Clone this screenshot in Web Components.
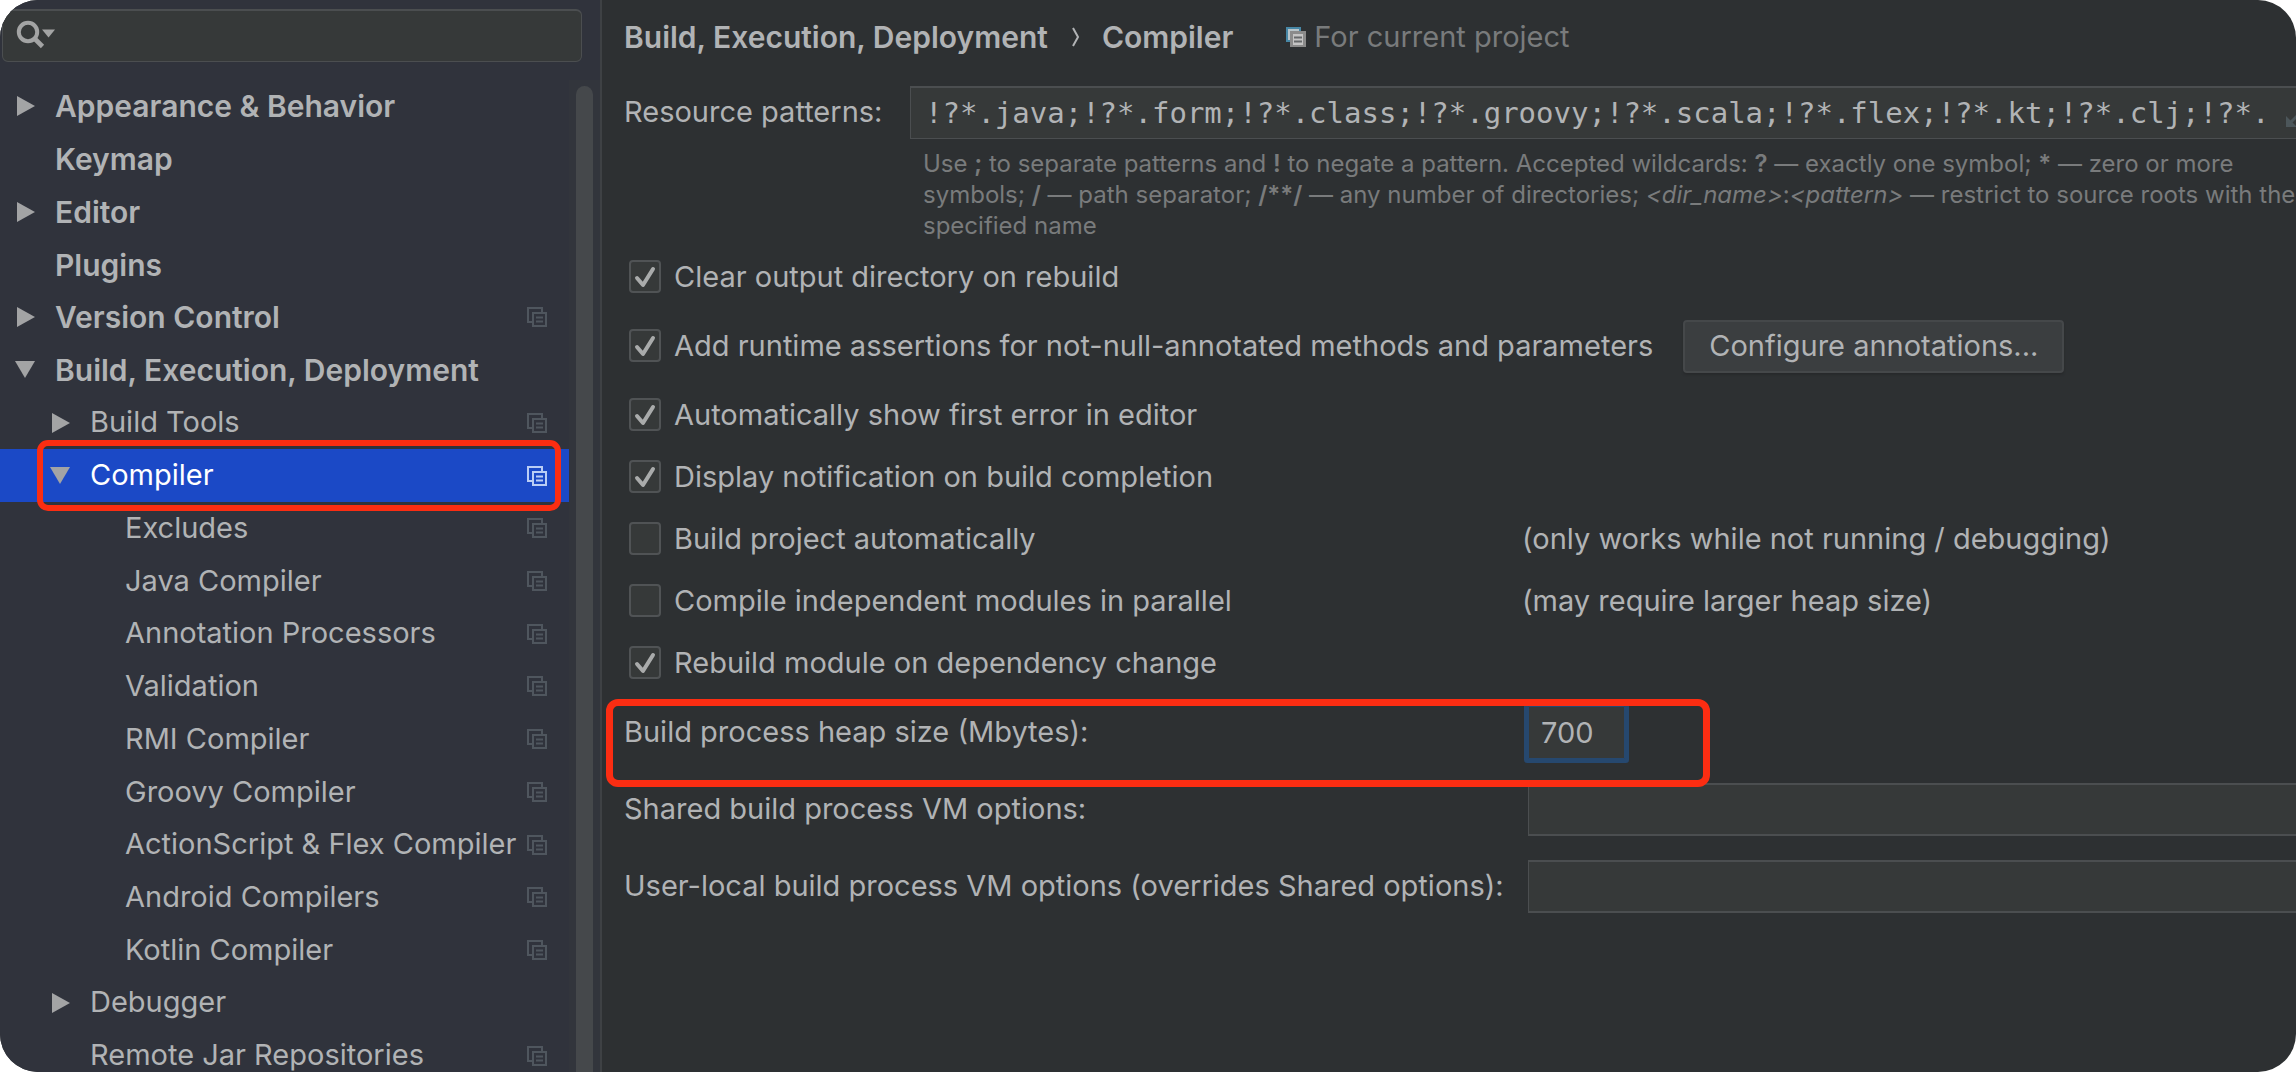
<!DOCTYPE html>
<html lang="en">
<head>
<meta charset="utf-8">
<title>Settings – Compiler</title>
<style>
  html, body { height: 100%; margin: 0; background: #fff; }
  body {
    --text: #b1b3b5;
    --muted: #797b7c;
    --field: #363939;
    --edge: #4b4e50;
    --mark: #fb2d12;
    color: var(--text);
    font: 400 29px/1.2 Inter, sans-serif;
  }
</style>
</head>
<body>
<settings-dialog>
  <settings-sidebar slot="side">
    <search-field slot="search"></search-field>
    <tree-item level="0" arrow="closed">Appearance &amp; Behavior</tree-item>
    <tree-item level="0">Keymap</tree-item>
    <tree-item level="0" arrow="closed">Editor</tree-item>
    <tree-item level="0">Plugins</tree-item>
    <tree-item level="0" arrow="closed" project>Version Control</tree-item>
    <tree-item level="0" arrow="open">Build, Execution, Deployment</tree-item>
    <tree-item level="1" arrow="closed" project>Build Tools</tree-item>
    <tree-item level="1" arrow="open" project selected>Compiler</tree-item>
    <tree-item level="2" project>Excludes</tree-item>
    <tree-item level="2" project>Java Compiler</tree-item>
    <tree-item level="2" project>Annotation Processors</tree-item>
    <tree-item level="2" project>Validation</tree-item>
    <tree-item level="2" project>RMI Compiler</tree-item>
    <tree-item level="2" project>Groovy Compiler</tree-item>
    <tree-item level="2" project>ActionScript &amp; Flex Compiler</tree-item>
    <tree-item level="2" project>Android Compilers</tree-item>
    <tree-item level="2" project>Kotlin Compiler</tree-item>
    <tree-item level="1" arrow="closed">Debugger</tree-item>
    <tree-item level="1" project>Remote Jar Repositories</tree-item>
  </settings-sidebar>

  <page-header>
    <a slot="parent" href="#build">Build, Execution, Deployment</a>
    <span slot="current">Compiler</span>
    <span slot="scope">For current project</span>
  </page-header>

  <pattern-field value="!?*.java;!?*.form;!?*.class;!?*.groovy;!?*.scala;!?*.flex;!?*.kt;!?*.clj;!?*.">
    <span slot="label">Resource patterns:</span>
    Use <b>;</b> to separate patterns and <b>!</b> to negate a pattern. Accepted wildcards: <b>?</b> — exactly one symbol; <b>*</b> — zero or more<br>
    symbols; <b>/</b> — path separator; <b>/**/</b> — any number of directories; <i>&lt;dir_name&gt;</i>:<i>&lt;pattern&gt;</i> — restrict to source roots with the<br>
    specified name
  </pattern-field>

  <check-row checked>Clear output directory on rebuild</check-row>
  <check-row checked tall>Add runtime assertions for not-null-annotated methods and parameters
    <push-button slot="action">Configure annotations...</push-button></check-row>
  <check-row checked>Automatically show first error in editor</check-row>
  <check-row checked>Display notification on build completion</check-row>
  <check-row>Build project automatically<span slot="note">(only works while not running / debugging)</span></check-row>
  <check-row>Compile independent modules in parallel<span slot="note">(may require larger heap size)</span></check-row>
  <check-row checked>Rebuild module on dependency change</check-row>

  <text-row value="700" short marked>Build process heap size (Mbytes):</text-row>
  <text-row>Shared build process VM options:</text-row>
  <text-row>User-local build process VM options (overrides Shared options):</text-row>
</settings-dialog>

<script>
const define = (name, render) => customElements.define(name, class extends HTMLElement {
  constructor() {
    super();
    this.attachShadow({ mode: 'open' });
  }
  connectedCallback() {
    this.shadowRoot.innerHTML = '<style>*{box-sizing:border-box}</style>' + render(this);
  }
});

define('settings-dialog', () => `
  <style>
    :host { display: flex; height: 100vh; overflow: hidden; border-radius: 38px; background: #2d3032; }
    main { flex: 1; min-width: 0; padding-left: 22px; border-left: 2px solid #3e4144; overflow: hidden; white-space: nowrap; }
  </style>
  <slot name="side"></slot>
  <main><slot></slot></main>`);

define('settings-sidebar', () => `
  <style>
    :host { display: flex; flex-direction: column; flex: none; width: 600px; overflow: hidden; background: #30333c; }
    .top { padding: 9px 18px 18px 2px; }
    .body { flex: 1; min-height: 0; display: flex; margin-bottom: -10px; }
    .tree { flex: 1; min-width: 0; display: grid; grid-auto-rows: 1fr; }
    .track { width: 31px; padding: 6px 7px 0; background: #32353c; }
    .thumb { height: 100%; border-radius: 9px; background: #45484b; }
  </style>
  <div class="top"><slot name="search"></slot></div>
  <div class="body">
    <div class="tree" role="tree"><slot></slot></div>
    <div class="track"><div class="thumb"></div></div>
  </div>`);

define('search-field', () => `
  <style>
    :host { display: block; }
    label { display: flex; align-items: center; height: 53px; padding-left: 13px; gap: 8px;
            border: 1px solid var(--edge); border-top-width: 2px; border-radius: 6px; background: var(--field); }
    svg { flex: none; margin-bottom: 2px; }
    input { flex: 1; min-width: 0; border: 0; outline: 0; background: none; color: inherit; font: inherit; }
  </style>
  <label>
    <svg width="40" height="30" viewBox="0 0 40 30" aria-hidden="true">
      <circle cx="12" cy="12" r="9.2" fill="none" stroke="#a3a4a4" stroke-width="4"/>
      <path d="M18.5 18.5L26.5 26.5" stroke="#a3a4a4" stroke-width="4.6"/>
      <path d="M26 9.5H39L32.5 17.5Z" fill="#a3a4a4"/>
    </svg>
    <input type="text" aria-label="Search settings">
  </label>`);

const arrows = {
  closed: '<path d="M2 0L20 10L2 20Z"/>',
  open: '<path d="M0 1H20L10 18Z"/>'
};
define('tree-item', el => `
  <style>
    :host { display: flex; align-items: center; position: relative; min-height: 0; padding: 0 22px 0 15px; white-space: nowrap; }
    :host([level="0"]) { font-size: 30px; font-weight: 600; }
    :host([level="1"]) { padding-left: 50px; }
    :host([level="2"]) { padding-left: 85px; }
    :host([selected]) { background: #1b49c6; color: #fff; }
    .arrow { flex: none; width: 20px; height: 20px; margin-right: 20px; fill: #a3a4a5; }
    .label { flex: 1; }
    .copy { flex: none; fill: none; stroke: #4f565e; stroke-width: 2; }
    :host([selected]) .copy { stroke: #b9cdf5; }
    .mark { position: absolute; inset: -9px 8px -9px 37px; z-index: 1; border: 6px solid var(--mark); border-radius: 11px; }
  </style>
  <svg class="arrow" viewBox="0 0 20 20" aria-hidden="true">${arrows[el.getAttribute('arrow')] || ''}</svg>
  <span class="label" role="treeitem"><slot></slot></span>
  ${el.hasAttribute('project') ? `<svg class="copy" width="20" height="20" viewBox="0 0 20 20" aria-hidden="true">
    <path d="M5 15H1V1H15V5"/><rect x="6" y="6" width="13" height="13"/><path d="M9 10.5H16M9 14.5H16"/></svg>` : ''}
  ${el.hasAttribute('selected') ? '<div class="mark"></div>' : ''}`);

define('page-header', () => `
  <style>
    :host { display: flex; align-items: center; height: 74px; margin-bottom: 12px; }
    .crumbs { display: flex; align-items: center; gap: 18px; font-size: 30px; font-weight: 600; }
    ::slotted(a) { color: inherit; text-decoration: none; }
    .chev { width: 18px; height: 24px; fill: none; stroke: #b1b3b5; stroke-width: 2; }
    .scope { display: flex; align-items: center; gap: 8px; margin-left: 53px; color: var(--muted); }
  </style>
  <nav class="crumbs">
    <slot name="parent"></slot>
    <svg class="chev" viewBox="0 0 18 24" aria-hidden="true"><path d="M7 3L12 12L7 21"/></svg>
    <slot name="current"></slot>
  </nav>
  <div class="scope">
    <svg width="20" height="20" viewBox="0 0 20 20" aria-hidden="true">
      <path d="M0 0H15V5H5V15H0Z" fill="#4787a6"/>
      <path d="M3 13V3H13" fill="none" stroke="#b9c4c9" stroke-width="2"/>
      <rect x="4" y="4" width="16" height="16" fill="#8b8b8b"/>
      <rect x="7" y="7" width="10" height="11" fill="#c4c4c4"/>
      <path d="M8 10.5H16M8 14.5H16" stroke="#66696b" stroke-width="2"/>
    </svg>
    <slot name="scope"></slot>
  </div>`);

define('pattern-field', el => `
  <style>
    :host { display: grid; grid-template-columns: 286px 1fr; align-items: center; margin-bottom: 5px; }
    .box { display: flex; align-items: center; height: 53px; overflow: hidden; padding-left: 14px;
           border: 1px solid var(--edge); border-top-width: 2px; border-right: 0; background: var(--field); }
    input { flex: 1; min-width: 0; padding: 0; border: 0; outline: 0; background: none; color: inherit;
            font: 29px "DejaVu Sans Mono", monospace; }
    svg { flex: none; margin: 10px -10px 0 8px; }
    p { grid-column: 2; margin: 0; padding: 9px 0 0 13px; color: var(--muted); font-size: 24px; line-height: 31px; }
    ::slotted(b) { font-weight: 600; }
  </style>
  <label for="patterns"><slot name="label"></slot></label>
  <div class="box">
    <input id="patterns" type="text" value="${el.getAttribute('value')}">
    <svg width="20" height="20" viewBox="0 0 20 20" aria-hidden="true">
      <path d="M0 8V19H11Z" fill="#4c565a"/><path d="M5 14L14 5" stroke="#4c565a" stroke-width="3"/></svg>
  </div>
  <p><slot></slot></p>`);

define('check-row', el => `
  <style>
    :host { display: grid; grid-template-columns: 898px 1fr; align-items: center; height: 62px; }
    :host([tall]) { display: flex; height: 76px; gap: 30px; }
    label { display: flex; align-items: center; gap: 13px; padding-left: 5px; }
    .tick { display: grid; width: 32px; height: 33px; }
    .tick > * { grid-area: 1 / 1; }
    input { appearance: none; width: 32px; height: 33px; margin: 0; border: 2px solid #505355; border-radius: 4px; background: var(--field); }
    svg { pointer-events: none; fill: none; stroke: #a9abab; stroke-width: 4; stroke-linecap: round; stroke-linejoin: round; }
    input:not(:checked) + svg { display: none; }
  </style>
  <label>
    <span class="tick">
      <input type="checkbox" ${el.hasAttribute('checked') ? 'checked' : ''}>
      <svg width="32" height="33" viewBox="0 0 32 33" aria-hidden="true"><path d="M8 18L14 25L24 9"/></svg>
    </span>
    <span><slot></slot></span>
  </label>
  <slot name="note"></slot>
  <slot name="action"></slot>`);

define('push-button', () => `
  <style>
    :host { display: block; }
    button { height: 53px; padding: 0 24px; border: 2px solid #45484a; border-radius: 4px; background: #3b3e40;
             box-shadow: 0 2px 2px #282a2c; color: inherit; font: inherit; }
  </style>
  <button type="button"><slot></slot></button>`);

define('text-row', el => `
  <style>
    :host { display: grid; grid-template-columns: 904px 1fr; align-items: center; position: relative; height: 77px; }
    input { width: 100%; height: 53px; padding: 0 12px; border: 2px solid var(--edge); border-width: 2px 0 2px 1px; border-radius: 0;
            outline: 0; background: var(--field); color: inherit; font: inherit; }
    :host([short]) input { width: 97px; border: 1px solid #26486f; box-shadow: 0 0 0 4px #26486f; border-radius: 1px; }
    .mark { position: absolute; inset: 5px auto -16px -18px; width: 1104px; border: 7px solid var(--mark); border-radius: 12px; pointer-events: none; }
    :host([marked]) { z-index: 1; }
  </style>
  <label for="value"><slot></slot></label>
  <input id="value" type="text" value="${el.getAttribute('value') || ''}">
  ${el.hasAttribute('marked') ? '<div class="mark"></div>' : ''}`);
</script>
</body>
</html>
